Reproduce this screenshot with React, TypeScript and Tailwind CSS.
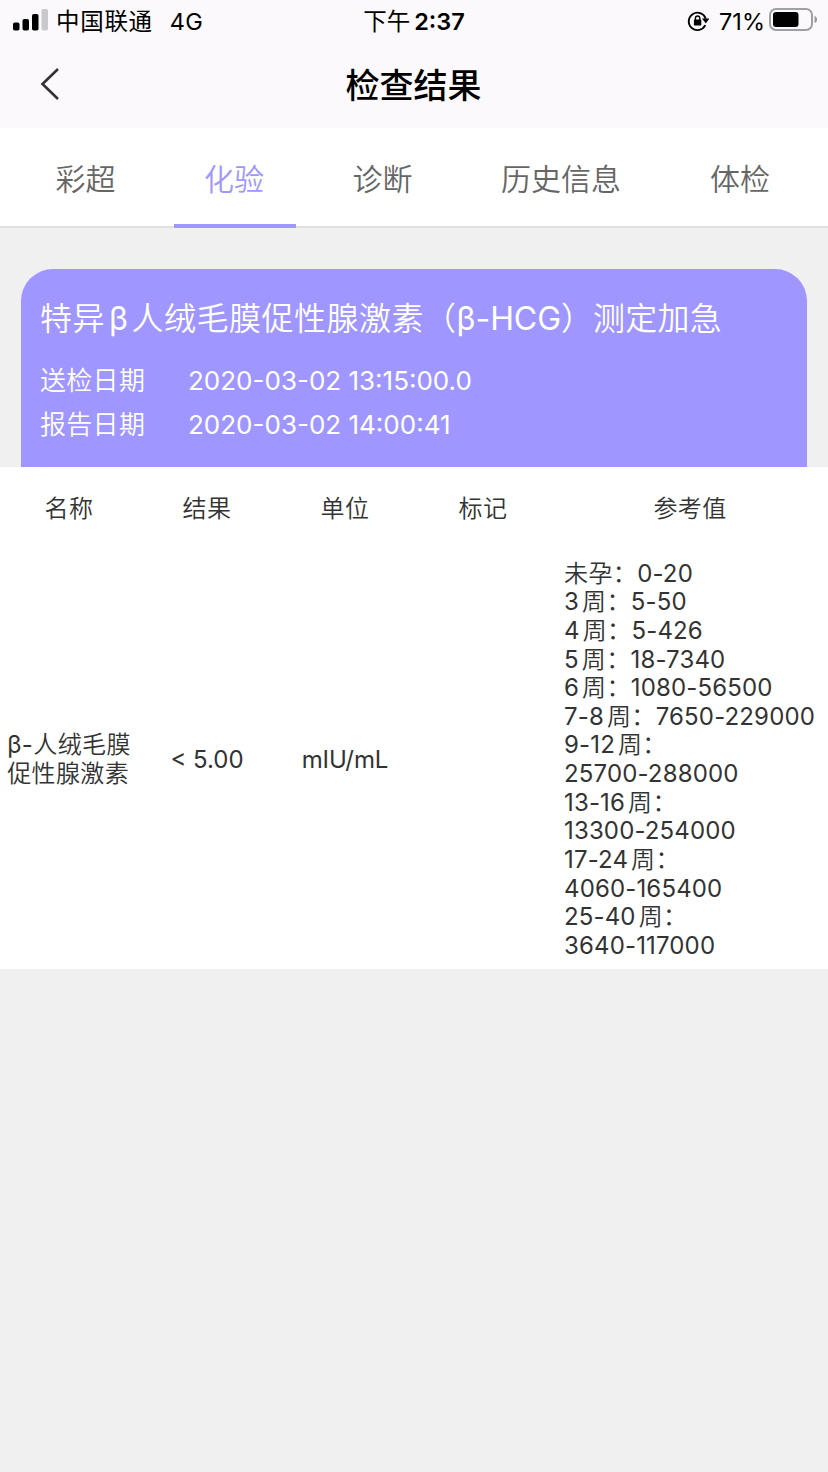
import type { ReactNode } from "react";

const tabs = [
  { label: "彩超", width: "w-[121px]", active: false },
  { label: "化验", width: "w-[122px]", active: true },
  { label: "诊断", width: "w-[121px]", active: false },
  { label: "历史信息", width: "w-[182px]", active: false },
  { label: "体检", width: "w-[122px]", active: false },
];

const references = [
  { lead: "", label: "未孕：", range: "0-20" },
  { lead: "3", label: "周：", range: "5-50" },
  { lead: "4", label: "周：", range: "5-426" },
  { lead: "5", label: "周：", range: "18-7340" },
  { lead: "6", label: "周：", range: "1080-56500" },
  { lead: "7-8", label: "周：", range: "7650-229000" },
  { lead: "9-12", label: "周：", range: "" },
  { lead: "", label: "", range: "25700-288000" },
  { lead: "13-16", label: "周：", range: "" },
  { lead: "", label: "", range: "13300-254000" },
  { lead: "17-24", label: "周：", range: "" },
  { lead: "", label: "", range: "4060-165400" },
  { lead: "25-40", label: "周：", range: "" },
  { lead: "", label: "", range: "3640-117000" },
];

function StatusBar() {
  return (
    <div className="grid h-10 grid-cols-[1fr_auto_1fr] items-center pt-1 text-[23.5px] leading-8 text-black">
      <div className="flex items-center pl-[13px]">
        <svg width="35" height="22" viewBox="0 0 35 22" className="-mt-[4px]">
          <rect x="0" y="13.5" width="6.5" height="8" rx="1.8" />
          <rect x="9.5" y="10" width="6.5" height="11.500" rx="1.8" />
          <rect x="19" y="5" width="6.500" height="16.500" rx="1.8" />
          <rect x="28.500" y="0" width="6.500" height="21.500" rx="1.8" fill="#c9c8ca" />
        </svg>
        <span className="ml-2 tracking-[0.7px]">中国联通</span>
        <span className="ml-[17px] tracking-[0.3px]">4G</span>
      </div>
      <div className="flex gap-1">
        <span>下午</span>
        <span className="font-semibold">2:37</span>
      </div>
      <div className="flex items-center justify-end pr-[10px]">
        <svg width="22" height="22" viewBox="0 0 22 22" fill="none" className="-mt-[2px] mr-[10px]">
          <path d="M18.300 15.200A8.700 8.700 0 1 1 18.700 8.600" stroke="#000" strokeWidth="1.900" />
          <path d="M15 8.600h7.200l-3.400 4.800z" fill="#000" />
          <rect x="6.900" y="9.600" width="7.400" height="6" rx=".8" fill="#000" />
          <path d="M8.400 10V8.200a2.200 2.200 0 0 1 4.400 0V10" stroke="#000" strokeWidth="1.400" />
        </svg>
        <span>71%</span>
        <svg width="49" height="23" viewBox="0 0 49 23" fill="none" className="-mt-[5px] ml-1">
          <rect x="1" y="1" width="42" height="21" rx="6" stroke="#a09fa1" strokeWidth="2" />
          <rect x="4" y="4" width="25.500" height="15" rx="3" fill="#000" />
          <path d="M45.500 8c3.500 1 3.500 6 0 7z" fill="#9a999b" />
        </svg>
      </div>
    </div>
  );
}

function Cell({ children }: { children?: ReactNode }) {
  return <div className="flex w-[138px] items-center justify-center">{children}</div>;
}

export default function App() {
  return (
    <div className="min-h-[1472px] w-[828px] bg-[#f0f0f0] font-['Inter','Noto_Sans_CJK_SC',sans-serif]">
      <header className="h-32 bg-[#fbf9fb]">
        <StatusBar />
        <div className="grid h-[88px] grid-cols-[1fr_auto_1fr] items-center">
          <svg width="20" height="34" viewBox="0 0 20 34" fill="none" className="ml-10">
            <path d="M18 2 2.500 17 18 32" stroke="#333" strokeWidth="2.600" />
          </svg>
          <h1 className="pt-[3px] pr-px text-[34px] leading-[48px] font-medium text-black">检查结果</h1>
        </div>
      </header>
      <nav className="flex h-[100px] justify-between border-b-2 border-[#e0e0e0] bg-white px-[26px]">
        {tabs.map((tab) => (
          <button
            key={tab.label}
            className={`${tab.width} -mb-[2px] flex items-center justify-center border-b-4 pt-[5px] pr-[2px] text-[30px] leading-none font-[350] ${
              tab.active ? "border-[#9f97ff] text-[#9f97ff]" : "border-transparent text-[#666]"
            }`}
          >
            {tab.label}
          </button>
        ))}
      </nav>
      <main className="pt-[41px]">
        <section className="mx-[21px] h-[198px] rounded-t-[32px] bg-[#9f97ff] px-[19px] pt-[26px] text-white">
          <h2 className="text-[32px] leading-[48px] font-[350] tracking-[0.5px] whitespace-nowrap">
            特异<span className="ml-1 mr-[3px] font-normal">β</span>人绒毛膜促性腺激素（
            <span className="font-normal tracking-[-0.1px]">β-HCG</span>
            <span className="tracking-[0.2px]">）测定加急</span>
          </h2>
          <dl className="mt-4 grid grid-cols-[148px_1fr] text-[26px] leading-[44px]">
            <dt className="font-[350] tracking-[0.3px]">送检日期</dt>
            <dd>2020-03-02 13:15:00.0</dd>
            <dt className="font-[350] tracking-[0.3px]">报告日期</dt>
            <dd>2020-03-02 14:00:41</dd>
          </dl>
        </section>
        <section className="h-[502px] bg-white pt-px text-[24px] leading-[28.640px] text-[#333]">
          <div className="flex h-[82px] font-[350] tracking-[0.4px]">
            <Cell>名称</Cell>
            <Cell>结果</Cell>
            <Cell>单位</Cell>
            <Cell>标记</Cell>
            <div className="flex w-[276px] items-center justify-center">参考值</div>
          </div>
          <div className="flex h-[420px]">
            <Cell>
              <p className="font-[350] tracking-[0.4px]">
                <span className="font-normal">β-</span>人绒毛膜
                <br />
                促性腺激素
              </p>
            </Cell>
            <Cell>&lt; 5.00</Cell>
            <Cell>
              <span className="tracking-[-0.1px]">mIU/mL</span>
            </Cell>
            <Cell />
            <div className="flex w-[276px] flex-col justify-center pl-3 whitespace-nowrap">
              {references.map(({ lead, label, range }) => (
                <div key={lead + range} className="flex h-[28.640px] tracking-[0.15px]">
                  {lead && <span className="mr-[3px]">{lead}</span>}
                  {label && <span className="font-[350] tracking-[0.4px]">{label}</span>}
                  <span>{range}</span>
                </div>
              ))}
            </div>
          </div>
        </section>
      </main>
    </div>
  );
}
